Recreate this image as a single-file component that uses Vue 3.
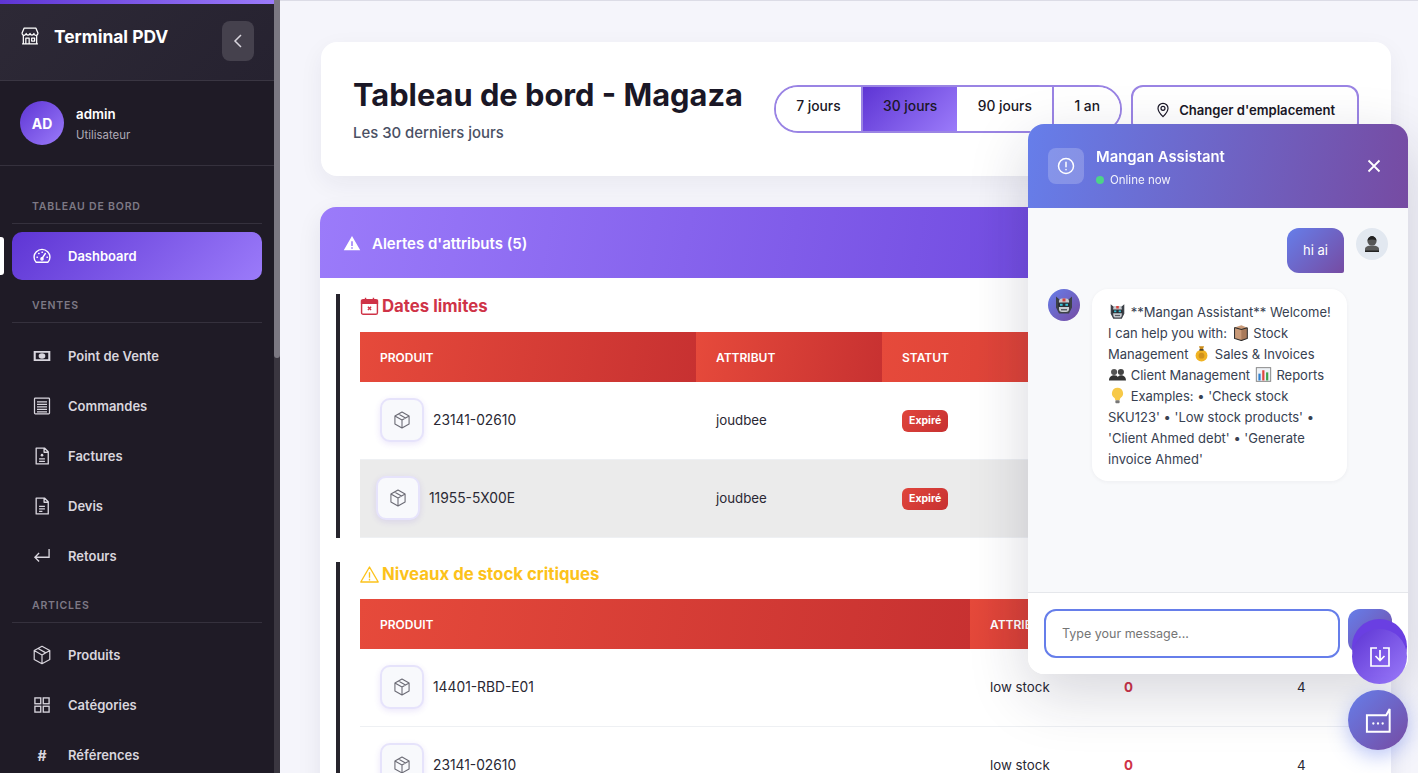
<script setup>
import { ref } from 'vue'

const periods = ['7 jours', '30 jours', '90 jours', '1 an']
const activePeriod = ref('30 jours')

const navGroups = [
  { title: 'Tableau de bord', items: [{ label: 'Dashboard', icon: 'gauge', active: true }] },
  {
    title: 'Ventes',
    items: [
      { label: 'Point de Vente', icon: 'cash' },
      { label: 'Commandes', icon: 'list' },
      { label: 'Factures', icon: 'invoice' },
      { label: 'Devis', icon: 'doc' },
      { label: 'Retours', icon: 'return' }
    ]
  },
  {
    title: 'Articles',
    items: [
      { label: 'Produits', icon: 'box' },
      { label: 'Catégories', icon: 'grid' },
      { label: 'Références', icon: 'hash' }
    ]
  }
]

const deadlines = [
  { sku: '23141-02610', attr: 'joudbee', status: 'Expiré' },
  { sku: '11955-5X00E', attr: 'joudbee', status: 'Expiré', hover: true }
]

const stock = [
  { sku: '14401-RBD-E01', attr: 'low stock', qty: 0, min: 4 },
  { sku: '23141-02610', attr: 'low stock', qty: 0, min: 4 }
]
</script>

<template>
  <div class="layout">
    <svg class="defs" aria-hidden="true">
      <symbol id="i-box" viewBox="0 0 24 24">
        <path d="M12 2.500l8.500 4.700v9.600L12 21.500l-8.500-4.700V7.200z M3.500 7.200L12 12l8.500-4.800 M12 12v9.500 M7.700 4.900l8.500 4.800" fill="none" stroke="currentColor" stroke-width="1.300" stroke-linejoin="round" />
      </symbol>
      <symbol id="e-robot" viewBox="0 0 20 20">
        <path d="M2 1.500l3.500 3h9l3.500-3v11l-3 6H5l-3-6z" fill="#3d4148" />
        <rect x="5" y="3.500" width="10" height="13.500" rx="3" fill="#c9ccd1" />
        <rect x="8.500" y="3.500" width="3" height="3" fill="#d8413a" />
        <rect x="4" y="7.500" width="12" height="4.500" rx="1.500" fill="#2b2f36" />
        <rect x="6" y="8.800" width="2.600" height="2" fill="#35c4d8" />
        <rect x="11.400" y="8.800" width="2.600" height="2" fill="#35c4d8" />
        <rect x="7" y="14" width="6" height="1.400" fill="#555a62" />
      </symbol>
      <symbol id="e-user" viewBox="0 0 20 20">
        <circle cx="10" cy="7" r="4.600" fill="#565656" />
        <path d="M3 18v-3c0-2.400 2.600-3.600 7-3.600s7 1.200 7 3.600v3z" fill="#5a5a5a" />
        <path d="M3 18v-1.500h14V18z" fill="#222" />
        <path d="M5.500 6.500C6 3.500 8 2 10 2s4 1.500 4.500 4.500C12 5 8 5 5.500 6.500z" fill="#222" />
      </symbol>
    </svg>

    <aside class="sidebar">
      <div class="sidebar-head">
        <div class="brand">
          <svg class="brand-icon" viewBox="0 0 24 24" fill="none" stroke="currentColor" stroke-width="1.500" stroke-linejoin="round">
            <path d="M5 2.500h14l2.500 6a2.400 2.400 0 0 1-4.800.5 2.400 2.400 0 0 1-4.700 0 2.400 2.400 0 0 1-4.700 0 2.400 2.400 0 0 1-4.800-.5z" />
            <path d="M4 11.500V21.500h16V11.500 M7 21V14.500h4V21 M14 14.500h3.500V18H14z M2.500 21.500h19" />
          </svg>
          <span>Terminal PDV</span>
        </div>
        <button class="collapse">
          <svg width="14" height="16" viewBox="0 0 14 16" fill="none" stroke="currentColor" stroke-width="1.500"><path d="M10 2L4 8l6 6" /></svg>
        </button>
      </div>

      <div class="user">
        <div class="avatar">AD</div>
        <div>
          <div class="user-name">admin</div>
          <div class="user-role">Utilisateur</div>
        </div>
      </div>

      <nav class="nav">
        <div v-for="group in navGroups" :key="group.title" class="nav-group">
          <div class="nav-title">{{ group.title }}</div>
          <a v-for="item in group.items" :key="item.label" class="nav-item" :class="{ active: item.active }">
            <span class="nav-icon">
              <svg v-if="item.icon === 'gauge'" viewBox="0 0 24 24" fill="none" stroke="currentColor" stroke-width="1.700" stroke-linecap="round">
                <path d="M5 19.500h14c1.500-1.500 2.500-3.500 2.500-6a9.500 9.500 0 0 0-19 0c0 2.500 1 4.500 2.500 6z" />
                <path d="M12 15l4-6 M6 13.500h.5 M8 9h.5 M12 7.500h.5 M18 13.500h.5" />
                <circle cx="12" cy="15.500" r="1.300" />
              </svg>
              <svg v-else-if="item.icon === 'cash'" viewBox="0 0 24 24">
                <path fill-rule="evenodd" d="M2 6h20v12H2z M4.500 8.200v7.600h15V8.200z" fill="currentColor" />
                <ellipse cx="12" cy="12" rx="4" ry="3.200" fill="currentColor" />
              </svg>
              <svg v-else-if="item.icon === 'list'" viewBox="0 0 24 24" fill="none" stroke="currentColor" stroke-width="1.500">
                <rect x="3" y="2.500" width="18" height="19" rx="1" />
                <path d="M6 7h12 M6 10h12 M6 13h12 M6 16h12 M6 19h12" />
              </svg>
              <svg v-else-if="item.icon === 'invoice'" viewBox="0 0 24 24" fill="none" stroke="currentColor" stroke-width="1.600">
                <path d="M5 2.500h10l4.500 4.500v14.500H5z M14.500 2.500v5h5" stroke-linejoin="round" />
                <path d="M8.500 15.500h7 M8.500 18.500h7" />
                <circle cx="12" cy="11" r="1.600" fill="currentColor" stroke="none" />
              </svg>
              <svg v-else-if="item.icon === 'doc'" viewBox="0 0 24 24" fill="none" stroke="currentColor" stroke-width="1.600">
                <path d="M5 2.500h10l4.500 4.500v14.500H5z M14.500 2.500v5h5" stroke-linejoin="round" />
                <path d="M8.500 12.500h7 M8.500 15.500h7 M8.500 18.500h4" />
              </svg>
              <svg v-else-if="item.icon === 'return'" viewBox="0 0 24 24" fill="none" stroke="currentColor" stroke-width="1.600">
                <path d="M20.500 3.500V13.500H3.500 M8.500 8.500l-5 5 5 5" />
              </svg>
              <svg v-else-if="item.icon === 'box'" class="big" viewBox="0 0 24 24"><use href="#i-box" /></svg>
              <svg v-else-if="item.icon === 'grid'" viewBox="0 0 24 24" fill="none" stroke="currentColor" stroke-width="1.600">
                <rect x="3.500" y="3.500" width="7" height="7" /><rect x="13.500" y="3.500" width="7" height="7" />
                <rect x="3.500" y="13.500" width="7" height="7" /><rect x="13.500" y="13.500" width="7" height="7" />
              </svg>
              <span v-else class="hash">#</span>
            </span>
            <span>{{ item.label }}</span>
          </a>
        </div>
      </nav>
      <div class="side-scroll"><div class="side-thumb"></div></div>
    </aside>

    <main class="main">
      <header class="top-card">
        <div class="top-text">
          <h1>Tableau de bord - Magaza</h1>
          <p>Les 30 derniers jours</p>
        </div>
        <div class="periods">
          <button v-for="p in periods" :key="p" class="period" :class="{ on: p === activePeriod }">{{ p }}</button>
        </div>
        <button class="location">
          <svg width="16" height="16" viewBox="0 0 24 24" fill="none" stroke="currentColor" stroke-width="1.800">
            <path d="M12 22s-7.500-7-7.500-12.500a7.500 7.500 0 0 1 15 0C19.500 15 12 22 12 22z" /><circle cx="12" cy="9.500" r="3" />
          </svg>
          Changer d'emplacement
        </button>
      </header>

      <section class="alerts">
        <div class="alerts-head">
          <svg width="18" height="18" viewBox="0 0 24 24"><path fill="#fff" fill-rule="evenodd" d="M12 2.500L23 21.500H1z M11 9.500v6.500h2V9.500z M11 17.500v2h2v-2z" /></svg>
          <span>Alertes d'attributs (5)</span>
        </div>
        <div class="alerts-body">
          <div class="block">
            <h2 class="block-title red">
              <svg width="19" height="20" viewBox="0 0 24 24" fill="none" stroke="currentColor" stroke-width="1.800">
                <rect x="2" y="4" width="20" height="18.500" rx="2" /><path d="M2 5h20v3.500H2z" fill="currentColor" /><path d="M10 13l4 4 M14 13l-4 4 M7 1.500v3 M17 1.500v3" />
              </svg>
              Dates limites
            </h2>
            <table class="grid-table">
              <colgroup><col style="width: 336px" /><col style="width: 186px" /><col /></colgroup>
              <thead><tr><th>Produit</th><th>Attribut</th><th>Statut</th></tr></thead>
              <tbody>
                <tr v-for="row in deadlines" :key="row.sku" :class="{ hovered: row.hover }">
                  <td>
                    <div class="product">
                      <span class="thumb"><svg width="20" height="20" viewBox="0 0 24 24"><use href="#i-box" /></svg></span>
                      <span>{{ row.sku }}</span>
                    </div>
                  </td>
                  <td>{{ row.attr }}</td>
                  <td><span class="badge">{{ row.status }}</span></td>
                </tr>
              </tbody>
            </table>
          </div>

          <div class="block">
            <h2 class="block-title yellow">
              <svg width="19" height="19" viewBox="0 0 24 24" fill="none" stroke="currentColor" stroke-width="1.700" stroke-linejoin="round">
                <path d="M12 2.500L23 21.500H1z M12 9v7 M12 17.500v2" />
              </svg>
              Niveaux de stock critiques
            </h2>
            <table class="grid-table">
              <colgroup><col style="width: 610px" /><col style="width: 134px" /><col style="width: 173px" /><col /></colgroup>
              <thead><tr><th>Produit</th><th>Attribut</th><th>Stock</th><th>Seuil</th></tr></thead>
              <tbody>
                <tr v-for="row in stock" :key="row.sku">
                  <td>
                    <div class="product">
                      <span class="thumb"><svg width="20" height="20" viewBox="0 0 24 24"><use href="#i-box" /></svg></span>
                      <span>{{ row.sku }}</span>
                    </div>
                  </td>
                  <td>{{ row.attr }}</td>
                  <td class="qty">{{ row.qty }}</td>
                  <td>{{ row.min }}</td>
                </tr>
              </tbody>
            </table>
          </div>
        </div>
      </section>
    </main>

    <div class="chat">
      <div class="chat-head">
        <span class="chat-logo">
          <svg width="20" height="20" viewBox="0 0 24 24" fill="none" stroke="#fff" stroke-width="1.800" stroke-linecap="round">
            <circle cx="12" cy="12" r="9" /><path d="M12 7.500v5.500 M12 16.300v.2" />
          </svg>
        </span>
        <div class="chat-id">
          <div class="chat-name">Mangan Assistant</div>
          <div class="chat-status"><i></i>Online now</div>
        </div>
        <svg class="chat-close" width="16" height="16" viewBox="0 0 16 16" fill="none" stroke="#fff" stroke-width="1.800"><path d="M2.500 2.500l11 11 M13.500 2.500l-11 11" /></svg>
      </div>

      <div class="chat-body">
        <div class="msg mine">
          <div class="bubble-me">hi ai</div>
          <span class="me-avatar"><svg width="20" height="20"><use href="#e-user" /></svg></span>
        </div>
        <div class="msg">
          <span class="bot-avatar"><svg width="20" height="20"><use href="#e-robot" /></svg></span>
          <div class="bubble-bot">
            <svg class="emoji" viewBox="0 0 20 20"><use href="#e-robot" /></svg> **Mangan Assistant** Welcome!<br />
            I can help you with:
            <svg class="emoji" viewBox="0 0 20 20">
              <path d="M3 4l8-2.500 7 3V17l-7 2.500L3 17z" fill="#c99a78" /><path d="M11 6.500l7-2V17l-7 2.500z" fill="#a97a5a" /><path d="M3 4l8 2.500 7-2M3 4v13l8 2.500 7-2.500V4.500" fill="none" stroke="#2c2c2c" stroke-width="1.200" />
            </svg>
            Stock<br />
            Management
            <svg class="emoji" viewBox="0 0 20 20">
              <path d="M7 1.500h6l-1.500 4h-3z" fill="#c98a1a" /><ellipse cx="10" cy="12.500" rx="7" ry="6.800" fill="#f0b323" /><circle cx="10" cy="12.500" r="3.400" fill="#d1921a" /><rect x="7.500" y="5" width="5" height="1.500" fill="#222" />
            </svg>
            Sales &amp; Invoices<br />
            <svg class="emoji" viewBox="0 0 20 20">
              <circle cx="6" cy="7" r="3.600" fill="#555" /><circle cx="14" cy="7" r="3.600" fill="#444" /><path d="M0 17c0-4 3-6 6-6s4 1 4 2 1-2 4-2 6 2 6 6z" fill="#333" />
            </svg>
            Client Management
            <svg class="emoji" viewBox="0 0 20 20">
              <rect x="1.500" y="2" width="17" height="16" fill="#eef2f6" stroke="#777" /><rect x="4" y="9" width="2.600" height="8" fill="#2f80d0" /><rect x="8.500" y="5" width="2.600" height="12" fill="#e0483e" /><rect x="13" y="7.500" width="2.600" height="9.500" fill="#3fa34d" />
            </svg>
            Reports<br />
            <svg class="emoji" viewBox="0 0 20 20">
              <path d="M10 1a6.500 6.500 0 0 0-3.500 12c.6.500.8 1.500.8 2.500h5.400c0-1 .2-2 .8-2.500A6.500 6.500 0 0 0 10 1z" fill="#f7c948" /><rect x="7.500" y="15.500" width="5" height="3.500" rx="1" fill="#777" />
            </svg>
            Examples: • 'Check stock<br />
            SKU123' • 'Low stock products' •<br />
            'Client Ahmed debt' • 'Generate<br />
            invoice Ahmed'
          </div>
        </div>
      </div>

      <div class="chat-foot">
        <input class="chat-input" placeholder="Type your message..." />
        <button class="chat-send"></button>
      </div>
    </div>

    <button class="fab fab-back"></button>
    <button class="fab fab-export">
      <svg width="24" height="24" viewBox="0 0 24 24" fill="none" stroke="#fff" stroke-width="1.700">
        <path d="M7 3H3v18h18V3h-4" /><path d="M7 3h2 M15 3h2" /><path d="M12 5v10 M7.500 11l4.500 4.500 4.500-4.500" />
      </svg>
    </button>
    <button class="fab-chat">
      <svg width="28" height="28" viewBox="0 0 24 24" fill="none" stroke="#fff" stroke-width="1.700">
        <path d="M2.500 8h16.500l3-5.500V22H2.500z" />
        <circle cx="8" cy="15" r="1" fill="#fff" stroke="none" /><circle cx="12" cy="15" r="1" fill="#fff" stroke="none" /><circle cx="16" cy="15" r="1" fill="#fff" stroke="none" />
      </svg>
    </button>
  </div>
</template>

<style>
html, body {
  margin: 0;
  height: 100%;
  overflow: hidden;
}
</style>

<style scoped>
.layout {
  display: flex;
  height: 773px;
  overflow: hidden;
  font-family: Inter, "Liberation Sans", sans-serif;
  color: #1f1b2a;
  background: #f5f5fb;
}
.defs {
  position: absolute;
  width: 0;
  height: 0;
}

/* sidebar */
.sidebar {
  position: relative;
  flex: 0 0 280px;
  width: 280px;
  height: 773px;
  box-sizing: border-box;
  padding-right: 6px;
  background: #1f1b26;
  color: #d9d6de;
  overflow: hidden;
}
.sidebar-head {
  display: flex;
  align-items: flex-start;
  justify-content: space-between;
  height: 81px;
  box-sizing: border-box;
  padding: 17px 20px 0 20px;
  border-top: 4px solid;
  border-image: linear-gradient(90deg, #5e35d4, #9b7bfa) 1;
  background: linear-gradient(135deg, #2d2936, #262230);
  box-shadow: inset 0 -1px 0 #3a3642;
}
.brand {
  display: flex;
  align-items: center;
  gap: 14px;
  margin-top: -1px;
  height: 32px;
  font-size: 17.400px;
  font-weight: 700;
  color: #fff;
}
.brand-icon {
  width: 20px;
  height: 20px;
}
.collapse {
  display: flex;
  align-items: center;
  justify-content: center;
  width: 32px;
  height: 40px;
  padding: 0;
  border: 0;
  border-radius: 8px;
  background: #45414d;
  color: #d9d6de;
}
.user {
  display: flex;
  align-items: center;
  gap: 12px;
  height: 85px;
  box-sizing: border-box;
  padding: 0 20px;
  border-bottom: 1px solid #35313d;
}
.avatar {
  display: flex;
  align-items: center;
  justify-content: center;
  width: 44px;
  height: 44px;
  border-radius: 50%;
  background: linear-gradient(135deg, #5e35d4, #9b7bfa);
  color: #fff;
  font-size: 14px;
  font-weight: 700;
}
.user-name {
  font-size: 13.300px;
  font-weight: 600;
  color: #fff;
  line-height: 20px;
}
.user-role {
  margin-top: 3px;
  font-size: 11.400px;
  color: #aeaab6;
  line-height: 16px;
}
.nav {
  padding: 32px 12px 0;
}
.nav-title {
  height: 18px;
  margin-bottom: 8px;
  padding: 0 20px 7px;
  border-bottom: 1px solid #35313d;
  font-size: 10.500px;
  font-weight: 600;
  line-height: 18px;
  letter-spacing: 0.8px;
  text-transform: uppercase;
  color: #7d7985;
}
.nav-group + .nav-group {
  margin-top: 17px;
}
.nav-group:last-child {
  margin-top: 16px;
}
.nav-group:last-child .nav-title {
  margin-bottom: 7px;
}
.nav-item {
  position: relative;
  display: flex;
  align-items: center;
  gap: 16px;
  height: 50px;
  padding: 0 22px 0 20px;
  box-sizing: border-box;
  border-radius: 10px;
  font-size: 13px;
  font-weight: 600;
  color: #d9d6de;
}
.nav-item.active {
  height: 48px;
  background: linear-gradient(135deg, #5e35d4, #9b7bfa);
  color: #fff;
}
.nav-item.active::before {
  content: "";
  position: absolute;
  left: -12px;
  top: 5px;
  width: 4px;
  height: 38px;
  border-radius: 0 3px 3px 0;
  background: #fff;
}
.nav-icon {
  display: flex;
  align-items: center;
  justify-content: center;
  width: 20px;
  height: 20px;
}
.nav-icon svg {
  flex: none;
  width: 20px;
  height: 20px;
}
.nav-icon svg.big {
  width: 22px;
  height: 22px;
}
.hash {
  font-size: 14px;
  font-weight: 700;
}
.side-scroll {
  position: absolute;
  top: 0;
  right: 0;
  bottom: 0;
  width: 6px;
  background: #3a3640;
}
.side-thumb {
  height: 358px;
  border-radius: 0 0 3px 3px;
  background: #7b7882;
}

/* main */
.main {
  flex: 1;
  min-width: 0;
  box-sizing: border-box;
  padding: 41px 27px 0 40px;
  border-top: 1px solid #dcdce6;
}
.top-card {
  display: flex;
  align-items: flex-start;
  height: 134px;
  box-sizing: border-box;
  margin-left: 1px;
  padding: 32px;
  border-radius: 16px;
  background: #fff;
  box-shadow: 0 8px 24px rgba(30, 30, 60, 0.06);
}
.top-text {
  flex: 0 0 auto;
  margin-right: 31px;
}
h1 {
  margin: 1px 0 0;
  font-size: 30.800px;
  font-weight: 700;
  line-height: 40px;
  color: #1a1726;
}
.top-text p {
  margin: 9px 0 0;
  font-size: 14.900px;
  font-weight: 500;
  color: #4a5064;
}
.periods {
  display: flex;
  flex: none;
  height: 48px;
  margin-top: 11px;
  box-sizing: border-box;
  border: 2px solid #9a84e4;
  border-radius: 24px;
  overflow: hidden;
}
.period {
  flex: none;
  height: 44px;
  padding: 0 20.250px 6px;
  border: 0;
  border-right: 2px solid #9a84e4;
  background: #fff;
  font: 500 13.800px/38px Inter, sans-serif;
  white-space: nowrap;
  color: #1a1726;
}
.period:last-child,
.period:nth-child(2) {
  border-right: 0;
}
.period.on {
  background: linear-gradient(135deg, #5e35d4, #9b7bfa);
}
.location {
  display: flex;
  flex: none;
  align-items: center;
  justify-content: center;
  gap: 8px;
  width: 228px;
  height: 50px;
  margin: 11px 0 0 9px;
  box-sizing: border-box;
  border: 2px solid #9a84e4;
  border-radius: 12px;
  background: #fff;
  font: 600 13.100px Inter, sans-serif;
  white-space: nowrap;
  color: #1a1726;
}
.alerts {
  margin-top: 31px;
  border-radius: 16px 16px 0 0;
  background: #fff;
  box-shadow: 0 8px 24px rgba(30, 30, 60, 0.08);
}
.alerts-head {
  display: flex;
  align-items: center;
  gap: 11px;
  height: 71px;
  padding: 1px 24px 0 23px;
  box-sizing: border-box;
  border-radius: 16px 16px 0 0;
  background: linear-gradient(100deg, #9b7bfa, #5e35d4);
  color: #fff;
  font-size: 15px;
  font-weight: 600;
}
.alerts-body {
  padding: 16px 15px 0 16px;
}
.block {
  margin-bottom: 24px;
  padding-left: 20px;
  border-left: 4px solid #26242c;
}
.block-title {
  display: flex;
  align-items: center;
  gap: 3px;
  height: 24px;
  margin: 0 0 14px;
  font-size: 16.800px;
  font-weight: 700;
}
.block-title.yellow {
  margin-bottom: 13px;
}
.red {
  color: #cf3347;
}
.yellow {
  color: #fcc21b;
}
.grid-table {
  width: 1016px;
  table-layout: fixed;
  border-collapse: collapse;
  font-size: 13.300px;
}
.grid-table th {
  height: 50px;
  padding: 0 20px;
  background: linear-gradient(100deg, #e64a3b, #c73131);
  color: #fff;
  font-size: 12px;
  font-weight: 600;
  text-align: left;
  text-transform: uppercase;
}
.grid-table td {
  height: 75px;
  padding: 0 20px 2px;
  border-bottom: 1px solid #eef0f3;
  color: #2a2833;
}
.grid-table tr.hovered td {
  background: #ebebeb;
}
.grid-table td.qty {
  font-weight: 700;
  color: #cf3347;
}
.product {
  display: flex;
  align-items: center;
  gap: 9px;
  font-size: 13.800px;
}
.thumb {
  display: flex;
  align-items: center;
  justify-content: center;
  width: 44px;
  height: 44px;
  box-sizing: border-box;
  border: 2px solid #e6e3fb;
  border-radius: 10px;
  background: #f8f9fc;
  color: #6b6b75;
  box-shadow: 0 2px 6px rgba(94, 53, 212, 0.12);
}
.hovered .product {
  transform: translateX(-4px);
}
.badge {
  display: inline-block;
  margin-top: 2px;
  padding: 3px 7px;
  border-radius: 6px;
  background: linear-gradient(135deg, #e0453c, #c73131);
  color: #fff;
  font-size: 10.500px;
  font-weight: 700;
  line-height: 16px;
}

/* chat */
.chat {
  position: fixed;
  top: 124px;
  left: 1028px;
  width: 380px;
  height: 550px;
  display: flex;
  flex-direction: column;
  border-radius: 16px;
  overflow: hidden;
  background: #fff;
  box-shadow: 0 20px 60px rgba(30, 30, 60, 0.18);
}
.chat-head {
  display: flex;
  align-items: center;
  flex: 0 0 84px;
  padding: 0 20px;
  box-sizing: border-box;
  background: linear-gradient(100deg, #667eea, #764ba2);
  color: #fff;
}
.chat-logo {
  display: flex;
  align-items: center;
  justify-content: center;
  width: 36px;
  height: 36px;
  border-radius: 8px;
  background: rgba(255, 255, 255, 0.2);
}
.chat-id {
  flex: 1;
  margin-left: 12px;
  padding-top: 2px;
}
.chat-name {
  font-size: 14.800px;
  font-weight: 600;
  line-height: 20px;
}
.chat-status {
  display: flex;
  align-items: center;
  gap: 6px;
  margin-top: 5px;
  font-size: 11.500px;
  line-height: 16px;
  opacity: 0.9;
}
.chat-status i {
  width: 8px;
  height: 8px;
  border-radius: 50%;
  background: #4ade80;
}
.chat-close {
  margin-right: 6px;
}
.chat-body {
  flex: 1;
  padding: 20px 20px 0;
  background: #f8f9fb;
}
.msg {
  display: flex;
  gap: 12px;
  align-items: flex-start;
}
.msg.mine {
  justify-content: flex-end;
  margin-bottom: 16px;
}
.bubble-me {
  padding: 14px 16px 15px;
  border-radius: 12px 12px 2px 12px;
  background: linear-gradient(135deg, #667eea, #764ba2);
  color: #fff;
  font-size: 13px;
  line-height: 16px;
}
.me-avatar, .bot-avatar {
  display: flex;
  align-items: center;
  justify-content: center;
  flex: 0 0 32px;
  width: 32px;
  height: 32px;
  border-radius: 50%;
  background: #e2e8f0;
}
.bot-avatar {
  background: linear-gradient(135deg, #667eea, #764ba2);
}
.bubble-bot {
  width: 255px;
  box-sizing: border-box;
  padding: 13px 10px 11px 16px;
  border-radius: 16px;
  background: #fff;
  color: #374151;
  font-size: 13px;
  line-height: 21px;
  white-space: nowrap;
  box-shadow: 0 1px 4px rgba(30, 30, 60, 0.05);
}
.emoji {
  display: inline-block;
  width: 17px;
  height: 17px;
  margin: 0 1px;
  vertical-align: -3px;
}
.chat-foot {
  display: flex;
  flex: 0 0 82px;
  gap: 8px;
  padding: 16px;
  box-sizing: border-box;
  border-top: 1px solid #e5e7eb;
  background: #fff;
}
.chat-input {
  width: 296px;
  height: 49px;
  box-sizing: border-box;
  padding: 0 16px;
  border: 2px solid #667eea;
  border-radius: 12px;
  outline: 0;
  font: 400 12.500px Inter, sans-serif;
}
.chat-send {
  width: 44px;
  height: 44px;
  padding: 0;
  border: 0;
  border-radius: 12px;
  background: linear-gradient(135deg, #667eea, #764ba2);
}
.fab, .fab-chat {
  position: fixed;
  display: flex;
  align-items: center;
  justify-content: center;
  padding: 0;
  border: 0;
  border-radius: 50%;
}
.fab {
  left: 1352px;
  width: 55px;
  height: 55px;
  background: linear-gradient(135deg, #5e35d4, #9b7bfa);
}
.fab-back {
  top: 619px;
  background: #6a3fe2;
}
.fab-export {
  top: 629px;
}
.fab-chat {
  top: 690px;
  left: 1348px;
  width: 60px;
  height: 60px;
  background: linear-gradient(135deg, #667eea, #764ba2);
  box-shadow: 0 6px 20px rgba(102, 126, 234, 0.45);
}
</style>
